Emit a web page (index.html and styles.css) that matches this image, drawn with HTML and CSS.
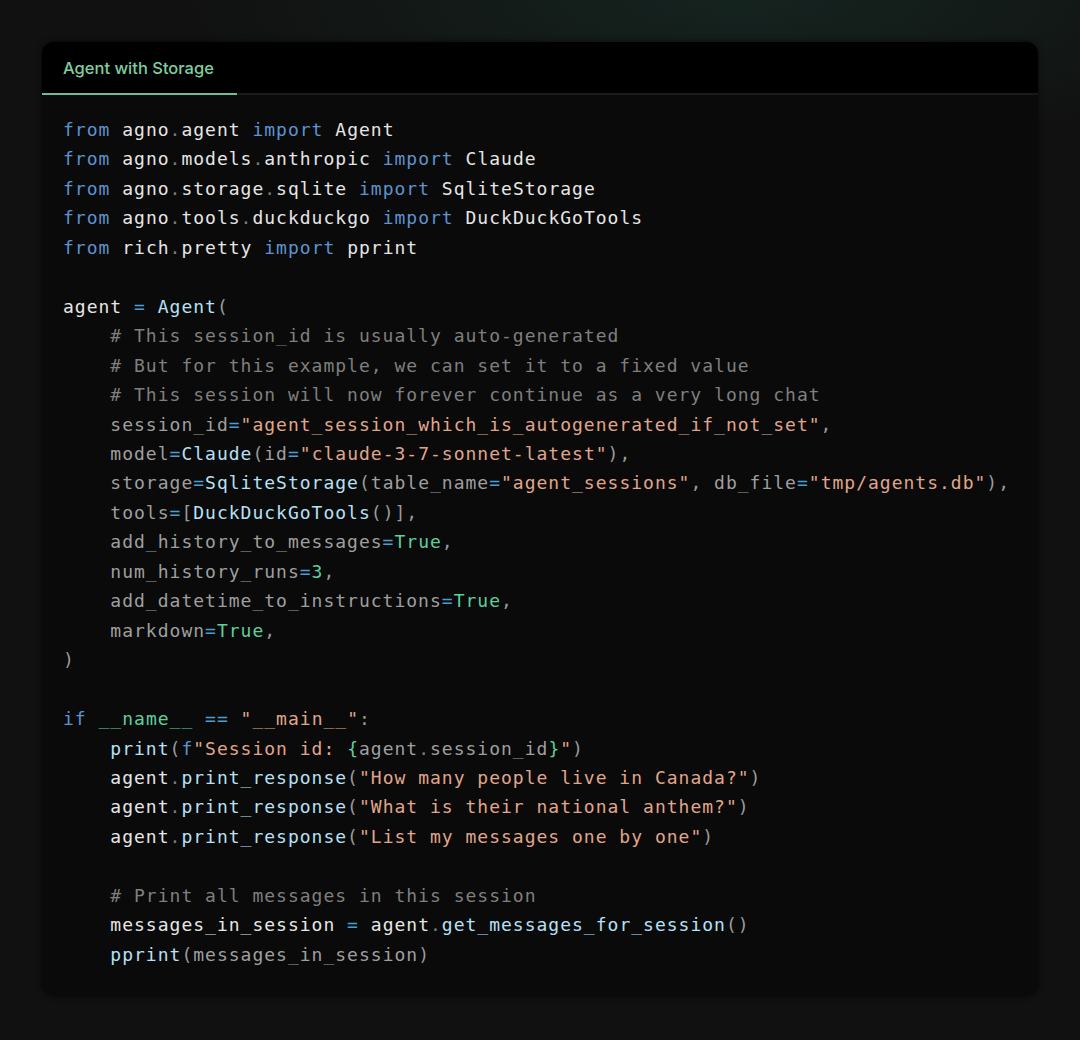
FILE: index.html
```html
<!DOCTYPE html>
<html>
<head>
<meta charset="utf-8">
<link rel="stylesheet" href="styles.css">
</head>
<body>
<div class="page">
  <div class="card">
    <div class="tabs">
      <div class="tab active">Agent with Storage</div>
    </div>
<pre class="code"><span class="kw">from</span> <span class="id">agno</span><span class="dot">.</span><span class="id">agent</span> <span class="kw">import</span> <span class="id">Agent</span>
<span class="kw">from</span> <span class="id">agno</span><span class="dot">.</span><span class="id">models</span><span class="dot">.</span><span class="id">anthropic</span> <span class="kw">import</span> <span class="id">Claude</span>
<span class="kw">from</span> <span class="id">agno</span><span class="dot">.</span><span class="id">storage</span><span class="dot">.</span><span class="id">sqlite</span> <span class="kw">import</span> <span class="id">SqliteStorage</span>
<span class="kw">from</span> <span class="id">agno</span><span class="dot">.</span><span class="id">tools</span><span class="dot">.</span><span class="id">duckduckgo</span> <span class="kw">import</span> <span class="id">DuckDuckGoTools</span>
<span class="kw">from</span> <span class="id">rich</span><span class="dot">.</span><span class="id">pretty</span> <span class="kw">import</span> <span class="id">pprint</span>

<span class="id">agent</span> <span class="op">=</span> <span class="cls">Agent</span><span class="pn">(</span>
    <span class="cm"># This session_id is usually auto-generated</span>
    <span class="cm"># But for this example, we can set it to a fixed value</span>
    <span class="cm"># This session will now forever continue as a very long chat</span>
    <span class="pa">session_id</span><span class="op">=</span><span class="str">"agent_session_which_is_autogenerated_if_not_set"</span><span class="pn">,</span>
    <span class="pa">model</span><span class="op">=</span><span class="cls">Claude</span><span class="pn">(</span><span class="pa">id</span><span class="op">=</span><span class="str">"claude-3-7-sonnet-latest"</span><span class="pn">),</span>
    <span class="pa">storage</span><span class="op">=</span><span class="cls">SqliteStorage</span><span class="pn">(</span><span class="pa">table_name</span><span class="op">=</span><span class="str">"agent_sessions"</span><span class="pn">,</span> <span class="pa">db_file</span><span class="op">=</span><span class="str">"tmp/agents.db"</span><span class="pn">),</span>
    <span class="pa">tools</span><span class="op">=</span><span class="pn">[</span><span class="cls">DuckDuckGoTools</span><span class="pn">()],</span>
    <span class="pa">add_history_to_messages</span><span class="op">=</span><span class="num">True</span><span class="pn">,</span>
    <span class="pa">num_history_runs</span><span class="op">=</span><span class="num">3</span><span class="pn">,</span>
    <span class="pa">add_datetime_to_instructions</span><span class="op">=</span><span class="num">True</span><span class="pn">,</span>
    <span class="pa">markdown</span><span class="op">=</span><span class="num">True</span><span class="pn">,</span>
<span class="pn">)</span>

<span class="kw">if</span> <span class="num">__name__</span> <span class="op">==</span> <span class="str">"__main__"</span><span class="pn">:</span>
    <span class="cls">print</span><span class="pn">(</span><span class="kw">f</span><span class="str">"Session id: </span><span class="num">{</span><span class="pa">agent</span><span class="dot">.</span><span class="pa">session_id</span><span class="num">}</span><span class="str">"</span><span class="pn">)</span>
    <span class="id">agent</span><span class="dot">.</span><span class="cls">print_response</span><span class="pn">(</span><span class="str">"How many people live in Canada?"</span><span class="pn">)</span>
    <span class="id">agent</span><span class="dot">.</span><span class="cls">print_response</span><span class="pn">(</span><span class="str">"What is their national anthem?"</span><span class="pn">)</span>
    <span class="id">agent</span><span class="dot">.</span><span class="cls">print_response</span><span class="pn">(</span><span class="str">"List my messages one by one"</span><span class="pn">)</span>

    <span class="cm"># Print all messages in this session</span>
    <span class="id">messages_in_session</span> <span class="op">=</span> <span class="id">agent</span><span class="dot">.</span><span class="cls">get_messages_for_session</span><span class="pn">()</span>
    <span class="cls">pprint</span><span class="pn">(</span><span class="pa">messages_in_session</span><span class="pn">)</span></pre>
  </div>
</div>
</body>
</html>
```

FILE: styles.css
```css
html, body {
  margin: 0;
  padding: 0;
}
body {
  background: #111111;
  width: 1080px;
  height: 1040px;
  overflow: hidden;
}
.page {
  height: 1040px;
  box-sizing: border-box;
  padding: 42px 42px 0 42px;
  background:
    radial-gradient(ellipse 560px 150px at 740px 0px, rgba(22, 40, 35, 0.8), rgba(22, 40, 35, 0) 100%),
    #111111;
}
.card {
  width: 996px;
  height: 954px;
  background: #0a0a0a;
  border-radius: 12px;
  overflow: hidden;
  box-shadow: 0 0 6px rgba(0, 0, 0, 0.6);
}
.tabs {
  display: flex;
  height: 51px;
  background: #000000;
  border-bottom: 2px solid #1a1a1a;
}
.tab {
  width: 195px;
  box-sizing: border-box;
  padding-left: 21px;
  display: flex;
  align-items: center;
  font-family: "Inter", "Liberation Sans", sans-serif;
  font-size: 16.5px;
  font-weight: 500;
  color: #7dcfa0;
  margin-bottom: -2px;
}
.tab.active {
  border-bottom: 2px solid #6fbd90;
}
.code {
  margin: 0;
  padding: 20px 21px 0 21px;
  font-family: "DejaVu Sans Mono", "Liberation Mono", monospace;
  font-size: 18px;
  letter-spacing: 1px;
  line-height: 29.46px;
  color: #e4e4e4;
  white-space: pre;
}
.kw { color: #5d93cf; }
.id { color: #e6e6e6; }
.dot { color: #7a7a7a; }
.op { color: #4c9ed2; }
.cls { color: #b7e0f6; }
.pn { color: #9a9a9a; }
.cm { color: #7f7f7f; }
.pa { color: #9f9f9f; }
.str { color: #e0a68c; }
.num { color: #5fcf9e; }
```
